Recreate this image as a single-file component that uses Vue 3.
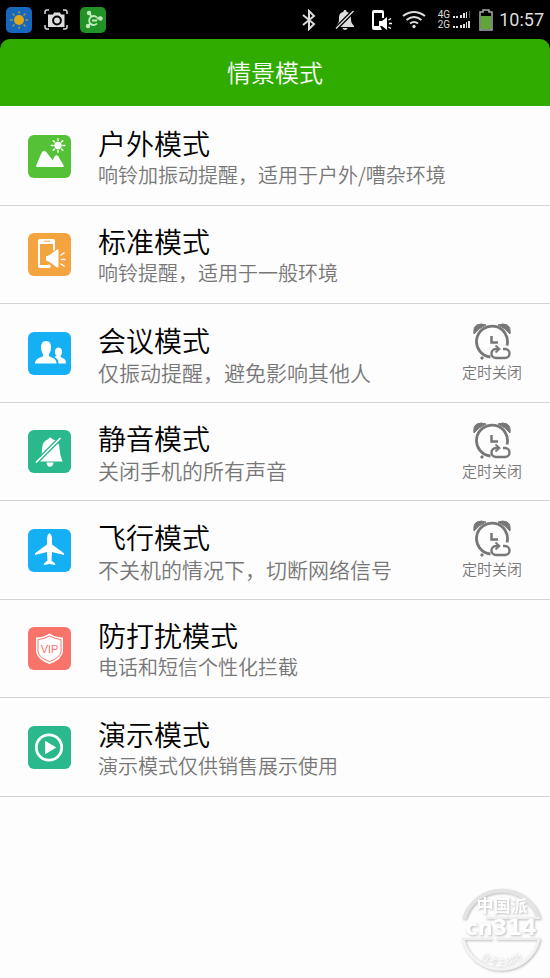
<script setup>
const modes = [
  { id: 'outdoor', name: '户外模式', desc: '响铃加振动提醒，适用于户外/嘈杂环境', color: '#55c136' },
  { id: 'standard', name: '标准模式', desc: '响铃提醒，适用于一般环境', color: '#f3a43f' },
  { id: 'meeting', name: '会议模式', desc: '仅振动提醒，避免影响其他人', color: '#15aff3', timer: true },
  { id: 'silent', name: '静音模式', desc: '关闭手机的所有声音', color: '#29b98c', timer: true },
  { id: 'flight', name: '飞行模式', desc: '不关机的情况下，切断网络信号', color: '#15aff3', timer: true },
  { id: 'vip', name: '防打扰模式', desc: '电话和短信个性化拦截', color: '#f8746a' },
  { id: 'demo', name: '演示模式', desc: '演示模式仅供销售展示使用', color: '#29b98c' },
]
const rays = [0, 45, 90, 135, 180, 225, 270, 315]
</script>

<template>
  <div class="screen">
    <div class="status">
      <div class="status-group apps">
        <svg class="app" viewBox="0 0 26 26">
          <rect width="26" height="26" rx="5" fill="#1767bd" />
          <circle cx="13" cy="13" r="5" fill="#dfa91d" />
          <path v-for="r in rays" :key="r" d="M13 4v2.6" :transform="`rotate(${r} 13 13)`" stroke="#c9a02c" stroke-width="1.2" />
        </svg>
        <svg class="app" viewBox="0 0 26 26" fill="none">
          <path d="M2 7V5q0-2 2-2h2M20 3h2q2 0 2 2v2M24 18v2q0 2-2 2h-2M6 22H4q-2 0-2-2v-2" stroke="#ddd" stroke-width="1.5" />
          <path d="M5 7.500h5l1-2h6l1 2h3.500V20H5z" fill="#ddd" />
          <circle cx="14" cy="13.500" r="3.900" stroke="#000" stroke-width="2" />
        </svg>
        <svg class="app" viewBox="0 0 26 26" fill="none">
          <rect width="26" height="26" rx="5" fill="#209226" />
          <path d="M17 10.500a4.500 4.500 0 1 0 0 6M12 13.500h5M9.500 6l2 4M20 10l-3 2M9 18l2-2" stroke="#c4e8bd" stroke-width="1.800" />
          <g fill="#c4e8bd"><circle cx="9" cy="6" r="2.200" /><circle cx="20.500" cy="11.500" r="2.200" /><circle cx="8" cy="19" r="2.200" /></g>
        </svg>
      </div>
      <div class="status-group">
        <svg class="bluetooth" viewBox="0 0 16 22" fill="none" stroke="#ddd" stroke-width="2">
          <path d="M2 6l11 9-5 5V2l5 5-11 9" />
        </svg>
        <svg class="bell" viewBox="0 0 20 22">
          <path d="M10 1c1 0 1.500.7 1.500 1.700C15 3.500 16 6 16 9c0 4 .5 5 3 8v1H1v-1c2.500-3 3-4 3-8 0-3 1-5.500 4.500-6.300C8.500 1.700 9 1 10 1zM7.500 19h5c-.5 2.500-4.500 2.500-5 0z" fill="#ddd" />
          <path d="M1 19.500L18.500 2" stroke="#000" stroke-width="4" />
          <path d="M1 19.500L18.500 2" stroke="#ddd" stroke-width="1.500" />
        </svg>
        <svg class="phone" viewBox="0 0 22 22">
          <path d="M3 1h8q2 0 2 2v6h-2V4H3v13h6l2 4H3q-2 0-2-2V3q0-2 2-2z" fill="#fff" />
          <path d="M8 12h3l5-4v13l-5-4H8z" fill="#fff" />
          <path d="M17.500 11l2.500-1.500M18 14.500h3M17.500 18l2.500 1.500" stroke="#fff" stroke-width="1.400" />
        </svg>
        <svg class="wifi" viewBox="0 0 24 20" fill="none" stroke="#ddd" stroke-width="2">
          <path d="M1 6q11-8 22 0M4.500 10q7.500-6 15 0M8 13.500q4-3 8 0" /><circle cx="12" cy="16.500" r="1.300" fill="#ddd" stroke-width="1" />
        </svg>
        <div class="networks">
          <div class="network"><span>4G</span>
            <svg class="signal" viewBox="0 0 17 8" fill="#ddd"><path d="M0 5h2v2H0zM3 5h2v2H3zM7 4h2v3H7zM10 2h2v5h-2zM13 1h1v6h-1z" /><path d="M16 0h1v7h-1z" fill="#555" /></svg>
          </div>
          <div class="network"><span>2G</span>
            <svg class="signal" viewBox="0 0 17 8" fill="#ddd"><path d="M0 5h2v2H0zM3 5h2v2H3zM7 4h2v3H7zM10 3h2v4h-2zM13 1h1v6h-1zM15 0h2v7h-2z" /></svg>
          </div>
        </div>
        <svg class="battery" viewBox="0 0 14 22">
          <path d="M4 1h6v2h3v18H1V3h3z" fill="none" stroke="#aaa" stroke-width="1.500" />
          <path d="M2 7h10v13H2z" fill="#5fa63a" />
        </svg>
        <time class="clock">10:57</time>
      </div>
    </div>

    <header class="header"><h1>情景模式</h1></header>

    <main>
      <ul class="modes">
        <li v-for="m in modes" :key="m.id" class="mode">
          <svg class="mode-icon" viewBox="0 0 43 43" fill="#fff">
            <rect width="43" height="43" rx="6" :fill="m.color" />
            <template v-if="m.id === 'outdoor'">
              <path d="M8 31l5-12q1.500-4 4-3 1 .5 2 2l5.500 7 2.500-4q1.500-1.500 3 0 1 1 1.500 2.500L36 31q0 1-1.500 1h-25Q8 32 8 31z" />
              <circle cx="30" cy="10.500" r="3.700" />
              <path v-for="r in rays" :key="r" d="M30 3.700v2" :transform="`rotate(${r} 30 10.500)`" stroke="#fff" stroke-width="1.400" stroke-linecap="round" />
            </template>
            <template v-else-if="m.id === 'standard'">
              <path fill-rule="evenodd" d="M12 6h13q2 0 2 2v9l-2 1V11H12v20h9l2 2q0 2-2 2h-9q-2 0-2-2V8q0-2 2-2zM16 7.800v1h6v-1z" />
              <path d="M12 11h13v8l-7 4v7l4 2H12z" :fill="m.color" />
              <path d="M18 23.500l3.500-1.500L29 16.500q1.500-.5 1.500 1v16q0 1.500-1.500 1L21.500 29 18 27.500z" />
              <path d="M33 22l3-2M33.500 26.500H37M33 31l3 2" stroke="#fff" stroke-width="1.500" stroke-linecap="round" />
            </template>
            <template v-else-if="m.id === 'meeting'">
              <path d="M7 31.500q0-4 4-5.500l4-1.700v-2Q13 20 13 15q0-6 5-6t5 6q0 5-2 7.300v2l4 1.700q3.500 1.500 3.500 5.500z" />
              <path d="M30.500 31.500q0-4-2.500-5.500l-1.500-1 2-1.500Q26.500 22 27 19q.5-3.500 3.500-3.500T34 19q0 4-1.500 5v1l3 1.500q2.500 1.200 2.500 5z" />
            </template>
            <template v-else-if="m.id === 'silent'">
              <path d="M20.500 9q0-1.500 1.700-1.500T24 9q7 1.500 7.500 9 .3 7.500 3 13.500H11q3-5 3-11.500Q14 11 20.500 9zM18.500 32.500h7q-.5 4.200-3.500 4.200t-3.500-4.200z" />
              <path d="M8.500 32L32 8.500" :stroke="m.color" stroke-width="4.500" />
              <path d="M8.500 32L32 8.500" stroke="#fff" stroke-width="1.700" stroke-linecap="round" />
            </template>
            <template v-else-if="m.id === 'flight'">
              <path d="M21.500 4q2.300 1.500 2.500 5v6.500l11 8q1.500 1 1 2.500l-12-3-.5 8.500 3.500 3q.5 1 0 1.500l-5.500-1-5.500 1q-.5-.5 0-1.500l3.500-3-.5-8.500L7 26q-.5-1.500 1-2.500l11-8V9q.2-3.500 2.500-5z" />
            </template>
            <template v-else-if="m.id === 'vip'">
              <path d="M21.500 6.500q6 4 13.500 4v14q-1 8-13.500 12.500Q9 32.500 8 24.500v-14q7.500 0 13.500-4z" />
              <path d="M21.500 9q5.500 3.200 11.500 3.500v12q-1 6.500-11.500 10Q11 31 10 24.500v-12q6-.3 11.500-3.500z" fill="none" :stroke="m.color" stroke-width="1" />
              <text class="vip-text" x="21.500" y="26" text-anchor="middle" :fill="m.color">VIP</text>
            </template>
            <template v-else>
              <circle cx="21" cy="21.500" r="12.700" fill="none" stroke="#fff" stroke-width="2.800" />
              <path d="M17.500 15.500L27.500 21.500l-10 6z" stroke="#fff" stroke-linejoin="round" />
            </template>
          </svg>
          <div class="mode-text">
            <h2>{{ m.name }}</h2>
            <p :class="{ large: m.timer }">{{ m.desc }}</p>
          </div>
          <button v-if="m.timer" type="button" class="timer">
            <svg class="alarm" viewBox="0 0 38 38" fill="none" stroke="#777" stroke-width="2.800">
              <path d="M1 11Q0 4 4 2t9 0Q6 5 1 11zM37 11q1-7-3-9t-9 0q7 3 12 9z" fill="#777" stroke="#777" stroke-width="1" />
              <path d="M17.500 34A15.500 15.500 0 1 1 34 22.500" />
              <path d="M18.500 13v6.500H25" stroke-width="2.500" />
              <path d="M8 34l2 2" />
              <path d="M25 26h-2a4.500 4.500 0 0 0 0 9h9a4.500 4.500 0 0 0 0-9h-2" stroke-width="2.400" />
              <path d="M22.500 22.500l4 3.500-4 3.500" stroke-width="1.800" />
            </svg>
            <span>定时关闭</span>
          </button>
        </li>
      </ul>
    </main>

    <svg class="watermark" viewBox="0 0 90 90">
      <defs><path id="seal-arc" d="M14 58a33 33 0 0 0 62 0" /></defs>
      <path d="M8 34a39 39 0 0 1 75 0" fill="none" stroke="#e4e4e4" stroke-width="4" />
      <path d="M7 54a39 39 0 0 0 76 0" fill="none" stroke="#f4f4f4" stroke-width="3" />
      <path d="M30 33h54M6 54h30M40 54h44" stroke="#eee" stroke-width="2" />
      <text class="seal-name" x="46" y="27" text-anchor="middle">中国派</text>
      <text class="seal-code" x="45" y="50" text-anchor="middle">cn314</text>
      <text class="seal-small"><textPath href="#seal-arc" startOffset="50%" text-anchor="middle">自考主战场</textPath></text>
    </svg>
  </div>
</template>

<style>
body {
  margin: 0;
  background: #000;
}
</style>

<style scoped>
.screen {
  position: relative;
  display: flex;
  flex-direction: column;
  min-height: 100vh;
  background: #fdfdfd;
  font-family: "Noto Sans CJK SC", sans-serif;
  font-weight: 350;
}
.status {
  display: flex;
  justify-content: space-between;
  align-items: center;
  height: 39px;
  padding: 0 6px;
  background: #000;
  color: #ddd;
}
.status-group {
  display: flex;
  align-items: center;
}
.apps { gap: 11px; }
.app { width: 26px; height: 26px; }
.bluetooth { width: 16px; height: 22px; margin-right: 18px; }
.bell { width: 20px; height: 22px; margin-right: 16px; }
.phone { width: 22px; height: 22px; margin-right: 9px; }
.wifi { width: 24px; height: 20px; margin-right: 12px; }
.networks { margin-right: 9px; }
.network {
  display: flex;
  align-items: center;
  gap: 3px;
  height: 10px;
  font: 10px/10px Roboto, sans-serif;
}
.signal { width: 17px; height: 8px; }
.battery { width: 14px; height: 22px; margin-right: 6px; }
.clock { font: 18px/24px Roboto, sans-serif; }
.header {
  display: flex;
  align-items: center;
  justify-content: center;
  box-sizing: border-box;
  height: 67px;
  padding-bottom: 2px;
  border-radius: 10px 10px 0 0;
  background: #30ac00;
  box-shadow: 0 -10px 0 10px #000;
  clip-path: inset(0);
}
.header h1 {
  margin: 0;
  color: #fff;
  font-size: 24px;
  font-weight: 350;
  line-height: 36px;
}
.modes {
  margin: 0;
  padding: 1px 0 0;
  list-style: none;
}
.mode {
  box-sizing: border-box;
  display: flex;
  align-items: center;
  height: 99px;
  padding: 0 28px;
  border-bottom: 1px solid #d4d4d4;
}
.mode:nth-child(even) { height: 98px; }
.mode-icon { flex: none; width: 43px; height: 43px; }
.mode-text { flex: 1; margin-left: 27px; padding-top: 1px; }
.mode-text h2 {
  margin: 0;
  color: #000;
  font-size: 28px;
  font-weight: 350;
  line-height: 36px;
}
.mode-text p {
  margin: 0;
  color: #777;
  font-size: 20px;
  line-height: 28px;
  white-space: nowrap;
}
.mode-text .large { font-size: 21px; }
.vip-text { font: 11px "Liberation Sans", sans-serif; }
.timer {
  display: flex;
  flex-direction: column;
  align-items: center;
  padding: 0;
  border: 0;
  background: none;
  color: #777;
  font: 350 15px/22px "Noto Sans CJK SC", sans-serif;
}
.alarm { width: 38px; height: 38px; }
.watermark {
  position: absolute;
  right: 4px;
  bottom: 3px;
  width: 90px;
  height: 90px;
  fill: #fff;
  filter: drop-shadow(1px 1px 1px #bbb);
}
.seal-name { font-size: 17px; font-weight: 700; }
.seal-code { font: 700 21px "DejaVu Sans", sans-serif; }
.seal-small { font-size: 9px; }
</style>
